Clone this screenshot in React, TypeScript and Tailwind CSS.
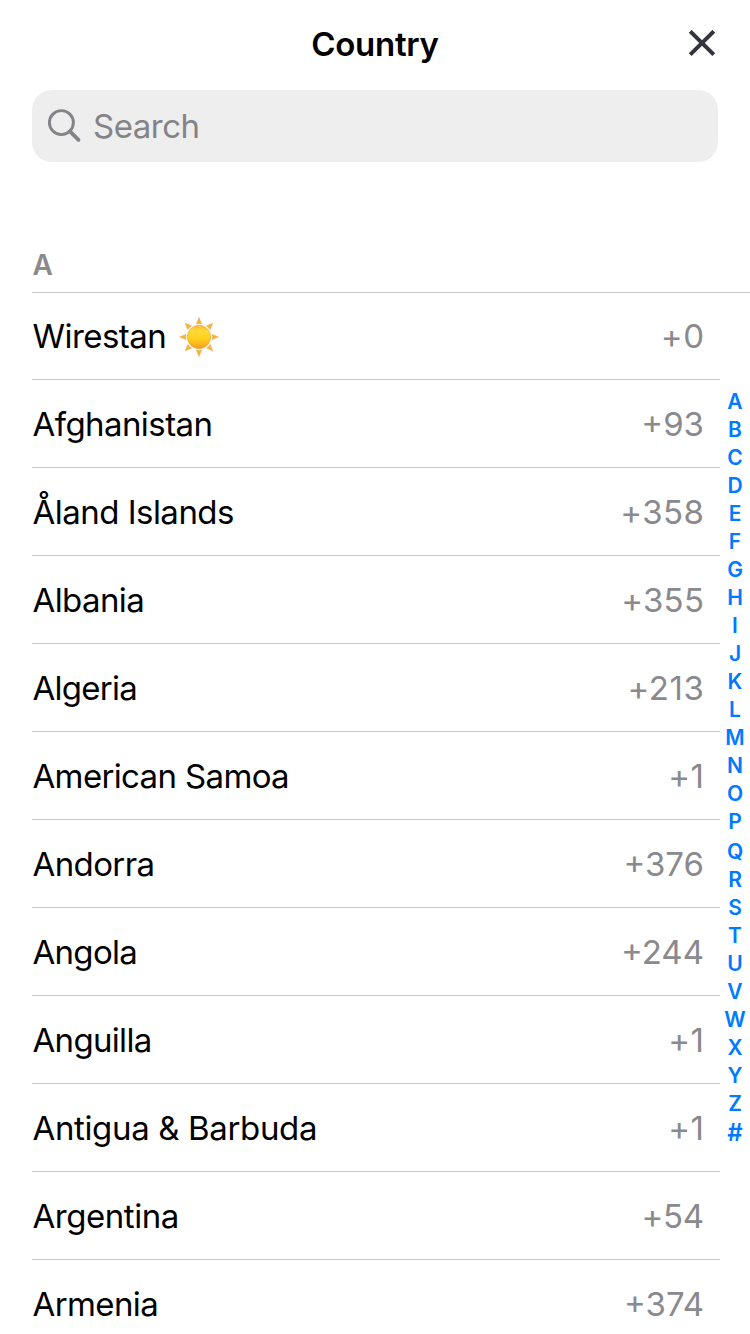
const countries = [
  { name: "Afghanistan", code: "+93", nameCls: "tracking-[-0.57px]", codeCls: "" },
  { name: "Åland Islands", code: "+358", nameCls: "tracking-[-0.52px]", codeCls: "tracking-[0.5px] -mr-[0.5px]" },
  { name: "Albania", code: "+355", nameCls: "tracking-[-0.6px]", codeCls: "tracking-[0.3px] -mr-[0.3px]" },
  { name: "Algeria", code: "+213", nameCls: "tracking-[-0.75px]", codeCls: "tracking-[0.6px] -mr-[0.6px]" },
  { name: "American Samoa", code: "+1", nameCls: "tracking-[-0.65px]", codeCls: "tracking-[0.5px] -mr-[0.5px]" },
  { name: "Andorra", code: "+376", nameCls: "tracking-[-0.6px]", codeCls: "" },
  { name: "Angola", code: "+244", nameCls: "tracking-[-0.7px]", codeCls: "" },
  { name: "Anguilla", code: "+1", nameCls: "tracking-[-0.68px]", codeCls: "tracking-[0.5px] -mr-[0.5px]" },
  { name: "Antigua & Barbuda", code: "+1", nameCls: "tracking-[-0.36px]", codeCls: "tracking-[0.5px] -mr-[0.5px]" },
  { name: "Argentina", code: "+54", nameCls: "tracking-[-0.45px]", codeCls: "tracking-[-0.3px] -mr-[-0.3px]" },
  { name: "Armenia", code: "+374", nameCls: "tracking-[-0.6px]", codeCls: "" },
];

const rays = [0, 45, 90, 135, 180, 225, 270, 315];

function Sun() {
  return (
    <svg className="ml-[13px] mt-px h-10 w-10" viewBox="0 0 40 40">
      <defs>
        <linearGradient id="disc" x1="0" y1="0" x2="0" y2="1">
          <stop offset="0" stopColor="#f7c23a" />
          <stop offset="0.25" stopColor="#fdd838" />
          <stop offset="0.55" stopColor="#ffd21c" />
          <stop offset="0.8" stopColor="#fdb51c" />
          <stop offset="1" stopColor="#f29a25" />
        </linearGradient>
      </defs>
      {rays.map((a) => (
        <path
          key={a}
          d="M20 0.6 L22.6 6.9 Q20 6.1 17.4 6.9 Z"
          fill="#f8b52c"
          stroke="#eda04a"
          strokeWidth="0.5"
          transform={`rotate(${a} 20 20)`}
        />
      ))}
      <circle cx="20" cy="20" r="11.7" fill="url(#disc)" stroke="#e9a23a" strokeWidth="0.6" />
    </svg>
  );
}

export default function App() {
  return (
    <div className="relative h-[1334px] w-[750px] overflow-hidden bg-white font-['Inter','Liberation_Sans',sans-serif] text-black">
      <header className="grid h-[90px] grid-cols-[1fr_auto_1fr] items-center pb-[2px] pr-[34px]">
        <span />
        <h1 className="ml-[34px] text-[33px] font-semibold leading-[40px] tracking-[-0.3px]">Country</h1>
        <svg className="h-7 w-7 justify-self-end" viewBox="0 0 28 28" stroke="#33343d" strokeWidth="4" fill="none">
          <path d="M2.2 1.3 L25.8 24.7 M25.8 1.3 L2.2 24.7" />
        </svg>
      </header>
      <div className="ml-8 flex h-[72px] w-[686px] items-center rounded-[20px] bg-[#eeeeee] pl-[15px] text-[#848488]">
        <svg className="h-9 w-9" viewBox="0 0 36 36" fill="none" stroke="currentColor">
          <circle cx="14.4" cy="14.6" r="12" strokeWidth="2.9" />
          <path d="M23 23.3 L31.5 31.8" strokeWidth="3.8" strokeLinecap="round" />
        </svg>
        <span className="ml-[10px] text-[33px] leading-[40px] tracking-[-0.5px]">Search</span>
      </div>
      <div className="ml-8 mt-[76px] flex h-[55px] items-center border-b border-[#c8c7cc] pl-[0.5px] text-[28px] font-semibold text-[#8a8a8e]">
        A
      </div>
      <ul className="ml-8 w-[688px] text-[33px] leading-[40px]">
        <li className="flex h-[87px] items-center border-b border-[#c8c7cc] pl-[0.5px] pr-4">
          <span className="tracking-[-0.55px]">Wirestan</span>
          <Sun />
          <span className="-mr-[0.5px] ml-auto tracking-[0.5px] text-[#8a8a8e]">+0</span>
        </li>
        {countries.map((c) => (
          <li key={c.name} className="flex h-[88px] items-center justify-between border-b border-[#c8c7cc] pl-[0.5px] pr-4">
            <span className={c.nameCls}>{c.name}</span>
            <span className={`text-[#8a8a8e] ${c.codeCls}`}>{c.code}</span>
          </li>
        ))}
      </ul>
      <nav className="absolute right-0 top-[388px] flex w-[30px] flex-col items-center text-[21px] font-semibold leading-[28px] text-[#007aff]">
        {"ABCDEFGHIJKLMNOP".split("").map((l) => (
          <span key={l}>{l}</span>
        ))}
        <div className="mt-[2px] flex flex-col items-center">
          {"QRSTUVWXYZ".split("").map((l) => (
            <span key={l}>{l}</span>
          ))}
          <span className="mt-px text-[24px]">#</span>
        </div>
      </nav>
    </div>
  );
}
